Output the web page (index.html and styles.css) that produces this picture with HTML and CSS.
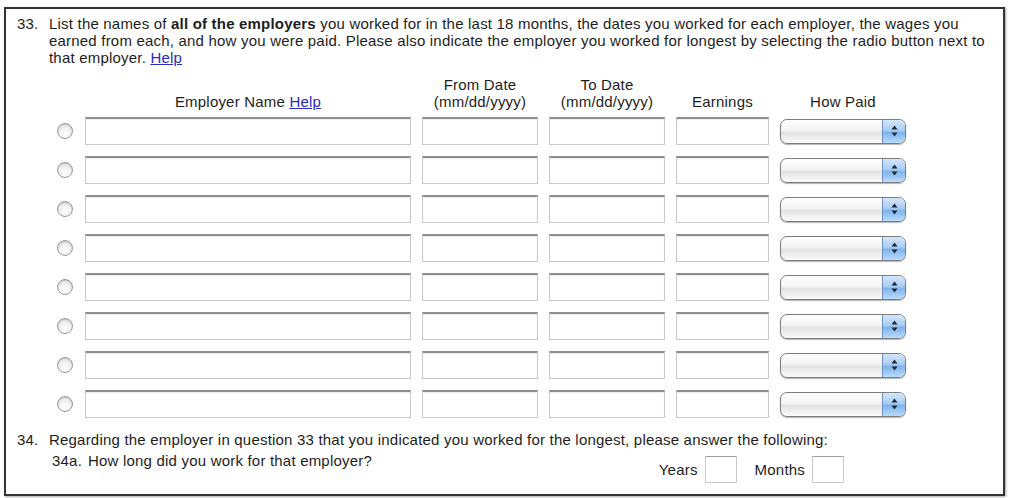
FILE: index.html
```html
<html lang="en">

<head>
    <meta charset="UTF-8">
    <meta name="viewport" content="width=device-width, initial-scale=1.0">
    <title>Employment History</title>
    <link rel="stylesheet" href="styles.css">
</head>

<body>
    <div class="frame">
        <div class="question">
            <span class="qnum">33.</span>
            <p class="qtext">List the names of <b>all of the employers</b> you worked for in the last 18 months, the dates you worked for each employer, the wages you earned from each, and how you were paid. Please also indicate the employer you worked for longest by selecting the radio button next to that employer. <a href="#">Help</a></p>
        </div>

        <div class="emp-grid emp-head">
            <span></span>
            <span>Employer Name <a href="#">Help</a></span>
            <span>From Date<br>(mm/dd/yyyy)</span>
            <span>To Date<br>(mm/dd/yyyy)</span>
            <span>Earnings</span>
            <span>How Paid</span>
        </div>

        <div class="emp-grid emp-rows" id="rows"></div>

        <div class="question q34">
            <span class="qnum">34.</span>
            <p class="qtext">Regarding the employer in question 33 that you indicated you worked for the longest, please answer the following:</p>
        </div>
        <div class="sub">
            <span class="subnum">34a.</span>
            <span class="subtext">How long did you work for that employer?</span>
            <div class="duration">
                <label for="years">Years</label>
                <input type="text" id="years" class="small-box">
                <label for="months" class="months-label">Months</label>
                <input type="text" id="months" class="small-box">
            </div>
        </div>
    </div>

    <script>
        const rows = document.getElementById('rows');
        for (let i = 0; i < 8; i++) {
            rows.innerHTML +=
                '<span class="radio-cell"><input type="radio" name="longest"></span>' +
                '<input type="text" class="field">' +
                '<input type="text" class="field">' +
                '<input type="text" class="field">' +
                '<input type="text" class="field">' +
                '<div class="select"><span class="stepper">' +
                '<svg width="7" height="12" viewBox="0 0 7 12"><path d="M3.5 0.5 L6.5 4.5 L0.5 4.5 Z M3.5 11.5 L6.5 7.5 L0.5 7.5 Z" fill="#1d2a3c"/></svg>' +
                '</span></div>';
        }
    </script>
</body>

</html>
```

FILE: styles.css
```css
body {
    margin: 0;
    font-family: "Liberation Sans", Arial, Helvetica, sans-serif;
    font-size: 15px;
    letter-spacing: 0.2px;
    line-height: 17px;
    color: #1e1e1e;
    background-color: #fff;
}

a {
    color: #2b2bc4;
    text-decoration: underline;
}

.frame {
    box-sizing: border-box;
    margin: 7px 6px 0 4px;
    height: 489px;
    border: 2px solid #333;
    box-shadow: 1px 1px 2px rgba(0, 0, 0, 0.35);
    padding-top: 6px;
}

.question {
    display: flex;
    padding: 0 10px 0 11px;
}

.qnum {
    flex: 0 0 32px;
}

.qtext {
    margin: 0;
}

.emp-grid {
    display: grid;
    grid-template-columns: 25px 326px 116px 116px 93px 126px;
    column-gap: 11px;
    padding-left: 43px;
}

.emp-head {
    margin-top: 10px;
    align-items: end;
    text-align: center;
}

.emp-rows {
    margin-top: 7px;
    row-gap: 11px;
    align-items: center;
}

.radio-cell {
    display: flex;
    justify-content: flex-end;
    padding-right: 1px;
}

input[type="radio"] {
    appearance: none;
    -webkit-appearance: none;
    margin: 0;
    width: 16px;
    height: 16px;
    border-radius: 50%;
    border: 1px solid #9a9a9a;
    background: radial-gradient(circle at 50% 70%, #ffffff 0%, #f2f2f2 45%, #d6d6d6 100%);
    box-shadow: inset 0 1px 1px rgba(0, 0, 0, 0.12);
    box-sizing: border-box;
}

.field {
    box-sizing: border-box;
    height: 28px;
    width: 100%;
    margin: 0;
    border: 1px solid #c8c8c8;
    border-top: 2px solid #8e8e8e;
    box-shadow: inset 0 1px 1px rgba(0, 0, 0, 0.08);
    background: #fff;
}

.select {
    box-sizing: border-box;
    height: 25px;
    display: flex;
    justify-content: flex-end;
    border: 1px solid #7d7d7d;
    border-radius: 7px;
    overflow: hidden;
    background: linear-gradient(#ffffff 0%, #f3f3f3 45%, #e2e2e2 55%, #fbfbfb 100%);
    box-shadow: 0 1px 1px rgba(0, 0, 0, 0.3);
}

.stepper {
    width: 22px;
    display: flex;
    align-items: center;
    justify-content: center;
    border-left: 1px solid #6f8fc0;
    background: linear-gradient(#d4e6fb 0%, #a9cdf4 45%, #7fb3ec 55%, #b9dbfa 100%);
}

.q34 {
    margin-top: 13px;
}

.sub {
    display: flex;
    align-items: flex-start;
    margin-top: 4px;
    padding-left: 46px;
}

.subnum {
    flex: 0 0 36px;
}

.duration {
    display: flex;
    align-items: center;
    margin: 4px 159px 0 auto;
}

.duration label {
    margin-right: 7px;
}

.months-label {
    margin-left: 18px;
}

.small-box {
    box-sizing: border-box;
    width: 32px;
    height: 27px;
    margin: 0;
    border: 1px solid #c8c8c8;
    border-top-color: #a0a0a0;
    background: #fff;
}
```
